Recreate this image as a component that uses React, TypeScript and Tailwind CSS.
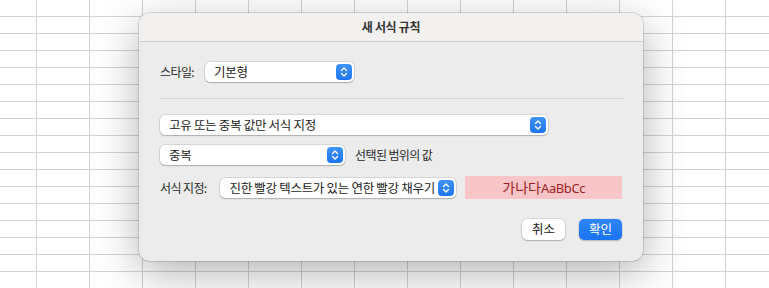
const FONT = { fontFamily: '"Noto Sans CJK KR", "Noto Sans", sans-serif' };

const COLS = 15;
const ROWS = 17;

function SheetGrid() {
  return (
    <div className="flex flex-col bg-white">
      {Array.from({ length: ROWS }).map((_, r) => (
        <div key={r} className="flex">
          {Array.from({ length: COLS }).map((_, c) => (
            <div
              key={c}
              className={`h-[17px] shrink-0 border-r border-b border-[#d3d3d3] ${
                c === 0 ? "w-[37px]" : "w-[53px]"
              }`}
            />
          ))}
        </div>
      ))}
    </div>
  );
}

function Stepper() {
  return (
    <span className="flex h-[16px] w-[16px] shrink-0 items-center justify-center rounded-[4px] bg-gradient-to-b from-[#3f93fa] to-[#1c74f2]">
      <svg width="8" height="12" viewBox="0 0 8 12" fill="none">
        <path
          d="M1.5 4.5 L4 2 L6.5 4.5 M1.5 7.5 L4 10 L6.5 7.5"
          stroke="white"
          strokeWidth="1.4"
          strokeLinecap="round"
          strokeLinejoin="round"
        />
      </svg>
    </span>
  );
}

function PopUp({ label, width }: { label: string; width: string }) {
  return (
    <div
      className={`flex h-[20px] ${width} shrink-0 items-center justify-between rounded-[5px] bg-white pl-[9px] pr-[2px] shadow-[0_0_0_0.5px_rgba(0,0,0,0.18),0_1px_1.5px_rgba(0,0,0,0.2)]`}
    >
      <span className="whitespace-nowrap text-[12.5px] leading-[16px] tracking-[-0.3px] text-[#222]">
        {label}
      </span>
      <Stepper />
    </div>
  );
}

const LABEL = "whitespace-nowrap text-[12px] leading-[16px] tracking-[-0.6px] text-[#2a2a2a]";

export default function App() {
  return (
    <div className="relative h-[288px] w-[769px] overflow-hidden bg-white" style={FONT}>
      <SheetGrid />

      <div className="absolute left-[139px] top-[13px] flex h-[248px] w-[504px] flex-col overflow-hidden rounded-[10px] bg-[#ececec] shadow-[0_0_0_0.5px_rgba(0,0,0,0.25),0_12px_44px_rgba(0,0,0,0.3)]">
        {/* title bar */}
        <div className="flex h-[29px] shrink-0 items-center justify-center border-b border-[#cdcdcd] bg-[#f2f1f0]">
          <span className="text-[12px] font-bold leading-[16px] tracking-[-0.3px] text-[#333]">
            새 서식 규칙
          </span>
        </div>

        <div className="flex flex-col px-[21px]">
          <div className="mt-[20px] flex h-[20px] items-center">
            <span className={`${LABEL} w-[45px]`}>스타일:</span>
            <PopUp label="기본형" width="w-[149px]" />
          </div>

          <div className="mt-[16px] h-px w-[464px] bg-[#d6d6d6]" />

          <div className="mt-[16px] flex h-[20px]">
            <PopUp label="고유 또는 중복 값만 서식 지정" width="w-[388px]" />
          </div>

          <div className="mt-[10px] flex h-[20px] items-center gap-[10px]">
            <PopUp label="중복" width="w-[185px]" />
            <span className={LABEL}>선택된 범위의 값</span>
          </div>

          <div className="mt-[11px] flex h-[23px] items-center">
            <span className={`${LABEL} w-[61px]`}>서식 지정:</span>
            <PopUp label="진한 빨강 텍스트가 있는 연한 빨강 채우기" width="w-[236px]" />
            <div className="ml-[9px] flex h-[23px] w-[158px] items-center justify-center bg-[#f8c5c9] text-[#9e1f25]">
              <span className="whitespace-nowrap text-[14px] leading-[18px]">
                가나다
                <span
                  className="text-[13px] tracking-[-0.4px]"
                  style={{ fontFamily: '"Noto Sans", sans-serif' }}
                >
                  AaBbCc
                </span>
              </span>
            </div>
          </div>

          <div className="mt-[20px] flex h-[21px] justify-end gap-[14px]">
            <button className="flex h-[21px] w-[43px] items-center justify-center rounded-[5px] bg-white text-[12.5px] leading-none text-[#222] shadow-[0_0_0_0.5px_rgba(0,0,0,0.18),0_1px_1.5px_rgba(0,0,0,0.2)]">
              취소
            </button>
            <button className="flex h-[21px] w-[43px] items-center justify-center rounded-[5px] bg-gradient-to-b from-[#2f86fb] to-[#1a73f0] text-[12.5px] leading-none text-white shadow-[0_0_0_0.5px_rgba(0,0,0,0.12),0_1px_1.5px_rgba(0,0,0,0.2)]">
              확인
            </button>
          </div>
        </div>
      </div>
    </div>
  );
}
